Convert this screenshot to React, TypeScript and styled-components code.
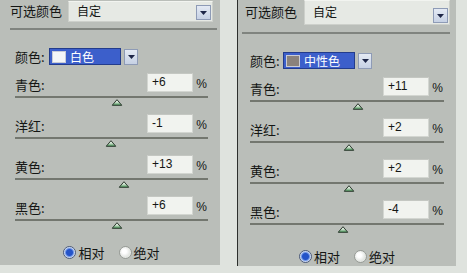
import React from "react";
import styled, { createGlobalStyle } from "styled-components";

const Global = createGlobalStyle`
  html, body { margin: 0; padding: 0; background: #dfe3de; }
  body { font-family: "Noto Sans CJK SC", "Noto Sans", sans-serif; color: #141614; }
`;

const Page = styled.div`
  display: flex;
  align-items: flex-start;
  width: 467px;
  height: 273px;
  overflow: hidden;
`;

const Panel = styled.section<{ $w: number; $h: number; $ml: number; $border?: boolean }>`
  box-sizing: border-box;
  width: ${(p) => p.$w}px;
  height: ${(p) => p.$h}px;
  margin-left: ${(p) => p.$ml}px;
  background: #babeb9;
  border-left: ${(p) => (p.$border ? "1px solid #2c2f2c" : "none")};
  display: flex;
  flex-direction: column;
`;

const Header = styled.div<{ $h: number; $pl: number }>`
  height: ${(p) => p.$h}px;
  display: flex;
  align-items: flex-start;
  padding-left: ${(p) => p.$pl}px;
`;

const Title = styled.div<{ $w: number; $top: number }>`
  width: ${(p) => p.$w}px;
  padding-top: ${(p) => p.$top}px;
  font-size: 13px;
  line-height: 16px;
  white-space: nowrap;
`;

const HeaderSelect = styled.div<{ $w: number; $top: number; $h: number }>`
  box-sizing: border-box;
  width: ${(p) => p.$w}px;
  height: ${(p) => p.$h}px;
  margin-top: ${(p) => p.$top}px;
  background: #e6e9e4;
  border: 1px solid #cdd0cb;
  border-top-color: #f2f4f0;
  display: flex;
  align-items: flex-end;
  justify-content: space-between;
  padding: 0 1px 1px 8px;
`;

const SelectText = styled.span`
  font-size: 12px;
  line-height: 18px;
  align-self: center;
`;

const ArrowBtn = styled.div<{ $w?: number; $h?: number }>`
  box-sizing: border-box;
  width: ${(p) => p.$w ?? 15}px;
  height: ${(p) => p.$h ?? 15}px;
  background: linear-gradient(#e4eaf4, #c6d1e4);
  border: 1px solid #8e9bb6;
  display: flex;
  align-items: center;
  justify-content: center;
  flex-shrink: 0;
`;

const Separator = styled.div<{ $ml: number; $mr: number }>`
  height: 2px;
  margin: 4px ${(p) => p.$mr}px 0 ${(p) => p.$ml}px;
  background: #80847f;
`;

const Body = styled.div<{ $pl: number; $pr: number }>`
  display: flex;
  flex-direction: column;
  padding: 0 ${(p) => p.$pr}px 0 ${(p) => p.$pl}px;
`;

const ColorRow = styled.div<{ $labelW: number }>`
  margin-top: 18px;
  height: 17px;
  display: flex;
  align-items: center;
  & > span:first-child {
    width: ${(p) => p.$labelW}px;
  }
`;

const Label = styled.span`
  font-size: 13px;
  line-height: 14px;
  white-space: nowrap;
`;

const ColorField = styled.div`
  box-sizing: border-box;
  width: 72px;
  height: 17px;
  background: #3c5fcb;
  border: 1px solid #233c8c;
  display: flex;
  align-items: center;
  padding-left: 2px;
  gap: 4px;
`;

const Swatch = styled.span<{ $c: string }>`
  box-sizing: border-box;
  width: 14px;
  height: 12px;
  background: ${(p) => p.$c};
  border: 1px solid #c9ccd6;
`;

const FieldText = styled.span`
  color: #ffffff;
  font-size: 12px;
  line-height: 14px;
`;

const ColorArrowWrap = styled.div`
  margin-left: 3px;
`;

const Sliders = styled.div`
  margin-top: 8px;
  display: flex;
  flex-direction: column;
  gap: 8px;
`;

const Group = styled.div`
  display: flex;
  flex-direction: column;
`;

const InputRow = styled.div`
  height: 19px;
  display: flex;
  align-items: flex-end;
`;

const Spacer = styled.div`
  flex: 1;
`;

const NumBox = styled.div`
  box-sizing: border-box;
  width: 46px;
  height: 19px;
  background: #f1f3ef;
  border: 1px solid #d3d6d1;
  border-top-color: #c4c7c2;
  font-family: "Liberation Sans", Arial, sans-serif;
  font-size: 12px;
  line-height: 17px;
  padding-left: 4px;
`;

const Percent = styled.span`
  width: 15px;
  text-align: right;
  padding-right: 1px;
  box-sizing: border-box;
  font-family: "Liberation Sans", Arial, sans-serif;
  font-size: 12px;
  line-height: 16px;
`;

const Track = styled.div`
  position: relative;
  margin-top: 4px;
  height: 2px;
  background: #73776f;
  margin-bottom: 8px;
`;

const ThumbSvg = styled.svg`
  position: absolute;
  top: 3px;
  transform: translateX(-50%);
`;

const RadioRow = styled.div`
  margin-top: 17px;
  height: 13px;
  display: flex;
  align-items: center;
  justify-content: center;
`;

const RadioItem = styled.label`
  display: flex;
  align-items: center;
  gap: 2px;
  font-size: 13px;
  line-height: 14px;
  & + & {
    margin-left: 14px;
  }
`;

const RadioDot = styled.span<{ $on?: boolean }>`
  box-sizing: border-box;
  width: 13px;
  height: 13px;
  border-radius: 50%;
  border: 1px solid ${(p) => (p.$on ? "#4b5a7a" : "#979b96")};
  background: ${(p) =>
    p.$on
      ? "radial-gradient(circle at 50% 50%, #2453c8 0 3px, #6f95e6 4px, #e9eff9 5.5px)"
      : "radial-gradient(circle at 40% 40%, #ffffff 0 2px, #e3e6e2 5.5px)"};
`;

const DownArrow = () => (
  <svg width="7" height="4" viewBox="0 0 7 4">
    <path d="M0 0 L7 0 L3.5 4 Z" fill="#1d2647" />
  </svg>
);

const Thumb = ({ value }: { value: number }) => (
  <ThumbSvg width="11" height="7" viewBox="0 0 11 7" style={{ left: `${50 + value / 2}%` }}>
    <defs>
      <linearGradient id="tg" x1="0" y1="0" x2="0" y2="1">
        <stop offset="0" stopColor="#eef4ee" />
        <stop offset="0.45" stopColor="#cfe2cf" />
        <stop offset="1" stopColor="#3f9150" />
      </linearGradient>
    </defs>
    <path d="M5.5 0.7 L10.3 6.3 L0.7 6.3 Z" fill="url(#tg)" stroke="#2e3b30" strokeWidth="1" strokeLinejoin="round" />
  </ThumbSvg>
);

type Cfg = {
  w: number;
  h: number;
  ml: number;
  border?: boolean;
  headerH: number;
  titlePl: number;
  titleW: number;
  titleTop: number;
  selW: number;
  selTop: number;
  selH: number;
  sepMl: number;
  sepMr: number;
  pl: number;
  pr: number;
  labelW: number;
  swatch: string;
  colorName: string;
  values: number[];
};

const names = ["青色:", "洋红:", "黄色:", "黑色:"];

const fmt = (v: number) => (v > 0 ? `+${v}` : `${v}`);

const SelectiveColor = ({ c }: { c: Cfg }) => (
  <Panel $w={c.w} $h={c.h} $ml={c.ml} $border={c.border}>
    <Header $h={c.headerH} $pl={c.titlePl}>
      <Title $w={c.titleW} $top={c.titleTop}>可选颜色</Title>
      <HeaderSelect $w={c.selW} $top={c.selTop} $h={c.selH}>
        <SelectText>自定</SelectText>
        <ArrowBtn>
          <DownArrow />
        </ArrowBtn>
      </HeaderSelect>
    </Header>
    <Separator $ml={c.sepMl} $mr={c.sepMr} />
    <Body $pl={c.pl} $pr={c.pr}>
      <ColorRow $labelW={c.labelW}>
        <Label>颜色:</Label>
        <ColorField>
          <Swatch $c={c.swatch} />
          <FieldText>{c.colorName}</FieldText>
        </ColorField>
        <ColorArrowWrap>
          <ArrowBtn $w={14} $h={16}>
            <DownArrow />
          </ArrowBtn>
        </ColorArrowWrap>
      </ColorRow>
      <Sliders>
        {c.values.map((v, i) => (
          <Group key={names[i]}>
            <InputRow>
              <Label>{names[i]}</Label>
              <Spacer />
              <NumBox>{fmt(v)}</NumBox>
              <Percent>%</Percent>
            </InputRow>
            <Track>
              <Thumb value={v} />
            </Track>
          </Group>
        ))}
      </Sliders>
      <RadioRow>
        <RadioItem>
          <RadioDot $on />
          相对
        </RadioItem>
        <RadioItem>
          <RadioDot />
          绝对
        </RadioItem>
      </RadioRow>
    </Body>
  </Panel>
);

const left: Cfg = {
  w: 220,
  h: 265,
  ml: 0,
  headerH: 24,
  titlePl: 10,
  titleW: 58,
  titleTop: 3,
  selW: 145,
  selTop: 1,
  selH: 21,
  sepMl: 10,
  sepMr: 3,
  pl: 15,
  pr: 12,
  labelW: 34,
  swatch: "#f4f6f8",
  colorName: "白色",
  values: [6, -1, 13, 6],
};

const right: Cfg = {
  w: 219,
  h: 266,
  ml: 17,
  border: true,
  headerH: 28,
  titlePl: 7,
  titleW: 59,
  titleTop: 4,
  selW: 146,
  selTop: 0,
  selH: 25,
  sepMl: 4,
  sepMr: 6,
  pl: 12,
  pr: 12,
  labelW: 33,
  swatch: "#8a827c",
  colorName: "中性色",
  values: [11, 2, 2, -4],
};

export default function App() {
  return (
    <>
      <Global />
      <Page>
        <SelectiveColor c={left} />
        <SelectiveColor c={right} />
      </Page>
    </>
  );
}
